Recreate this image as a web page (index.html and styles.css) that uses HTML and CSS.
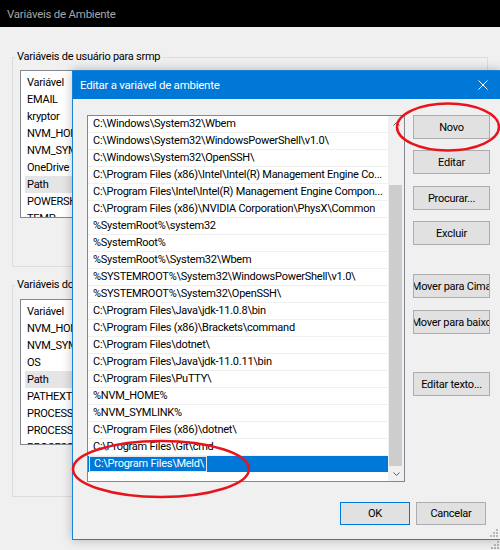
FILE: index.html
```html
<!DOCTYPE html>
<html lang="pt-BR">
<head>
    <meta charset="UTF-8">
    <title>Variáveis de Ambiente</title>
    <link rel="stylesheet" href="styles.css">
</head>
<body>

    <div class="window">
        <div class="win-title">Variáveis de Ambiente</div>
        <div class="win-body">
            <fieldset class="group user">
                <legend>Variáveis de usuário para srmp</legend>
                <div class="varlist">
                    <div class="var-head">Variável</div>
                    <div class="var">EMAIL</div>
                    <div class="var">kryptor</div>
                    <div class="var">NVM_HOME</div>
                    <div class="var">NVM_SYMLINK</div>
                    <div class="var">OneDrive</div>
                    <div class="var sel">Path</div>
                    <div class="var">POWERSHELL_DISTRIBUTION_CHANNEL</div>
                    <div class="var">TEMP</div>
                </div>
            </fieldset>
            <fieldset class="group sys">
                <legend>Variáveis do sistema</legend>
                <div class="varlist">
                    <div class="var-head">Variável</div>
                    <div class="var">NVM_HOME</div>
                    <div class="var">NVM_SYMLINK</div>
                    <div class="var">OS</div>
                    <div class="var sel">Path</div>
                    <div class="var">PATHEXT</div>
                    <div class="var">PROCESSOR_ARCHITECTURE</div>
                    <div class="var">PROCESSOR_IDENTIFIER</div>
                    <div class="var">PROCESSOR_LEVEL</div>
                </div>
            </fieldset>
        </div>
    </div>

    <div class="dialog">
        <div class="dlg-title">
            <span>Editar a variável de ambiente</span>
            <svg width="10" height="10" viewBox="0 0 10 10"><path d="M0.5 0.5L9.5 9.5M9.5 0.5L0.5 9.5" stroke="#fff" stroke-width="1"/></svg>
        </div>
        <div class="dlg-body">
            <div class="dlg-main">
                <div class="pathlist">
                    <div class="rows">
                        <div class="path">C:\Windows\System32\Wbem</div>
                        <div class="path">C:\Windows\System32\WindowsPowerShell\v1.0\</div>
                        <div class="path">C:\Windows\System32\OpenSSH\</div>
                        <div class="path">C:\Program Files (x86)\Intel\Intel(R) Management Engine Co...</div>
                        <div class="path">C:\Program Files\Intel\Intel(R) Management Engine Compon...</div>
                        <div class="path">C:\Program Files (x86)\NVIDIA Corporation\PhysX\Common</div>
                        <div class="path">%SystemRoot%\system32</div>
                        <div class="path">%SystemRoot%</div>
                        <div class="path">%SystemRoot%\System32\Wbem</div>
                        <div class="path">%SYSTEMROOT%\System32\WindowsPowerShell\v1.0\</div>
                        <div class="path">%SYSTEMROOT%\System32\OpenSSH\</div>
                        <div class="path">C:\Program Files\Java\jdk-11.0.8\bin</div>
                        <div class="path">C:\Program Files (x86)\Brackets\command</div>
                        <div class="path">C:\Program Files\dotnet\</div>
                        <div class="path">C:\Program Files\Java\jdk-11.0.11\bin</div>
                        <div class="path">C:\Program Files\PuTTY\</div>
                        <div class="path">%NVM_HOME%</div>
                        <div class="path">%NVM_SYMLINK%</div>
                        <div class="path">C:\Program Files (x86)\dotnet\</div>
                        <div class="path">C:\Program Files\Git\cmd</div>
                        <div class="path sel"><span class="edit">C:\Program Files\Meld\</span></div>
                    </div>
                    <div class="vscroll">
                        <div class="sb-btn">
                            <svg width="7" height="4" viewBox="0 0 7 4"><path d="M0.5 3.5L3.5 0.5L6.5 3.5" stroke="#606060" fill="none"/></svg>
                        </div>
                        <div class="sb-track"><div class="sb-thumb"></div></div>
                        <div class="sb-btn">
                            <svg width="7" height="4" viewBox="0 0 7 4"><path d="M0.5 0.5L3.5 3.5L6.5 0.5" stroke="#606060" fill="none"/></svg>
                        </div>
                    </div>
                </div>
                <div class="side">
                    <button class="btn">Novo</button>
                    <button class="btn">Editar</button>
                    <button class="btn">Procurar...</button>
                    <button class="btn">Excluir</button>
                    <button class="btn move"><span>Mover para Cima</span></button>
                    <button class="btn"><span>Mover para baixo</span></button>
                    <button class="btn text">Editar texto...</button>
                </div>
            </div>
            <div class="dlg-foot">
                <button class="btn default">OK</button>
                <button class="btn">Cancelar</button>
            </div>
        </div>
        <svg class="grip" width="8" height="8" viewBox="0 0 8 8">
            <rect x="6" y="0" width="2" height="2" fill="#b8b8b8"/>
            <rect x="3" y="3" width="2" height="2" fill="#b8b8b8"/>
            <rect x="6" y="3" width="2" height="2" fill="#b8b8b8"/>
            <rect x="0" y="6" width="2" height="2" fill="#b8b8b8"/>
            <rect x="3" y="6" width="2" height="2" fill="#b8b8b8"/>
            <rect x="6" y="6" width="2" height="2" fill="#b8b8b8"/>
        </svg>
    </div>

    <svg class="page-grip" width="8" height="8" viewBox="0 0 8 8">
        <rect x="6" y="0" width="2" height="2" fill="#b0b0b0"/>
        <rect x="3" y="3" width="2" height="2" fill="#b0b0b0"/>
        <rect x="6" y="3" width="2" height="2" fill="#b0b0b0"/>
        <rect x="0" y="6" width="2" height="2" fill="#b0b0b0"/>
        <rect x="3" y="6" width="2" height="2" fill="#b0b0b0"/>
        <rect x="6" y="6" width="2" height="2" fill="#b0b0b0"/>
    </svg>

    <!-- marcações em vermelho -->
    <svg class="marks" width="500" height="550" viewBox="0 0 500 550">
        <ellipse cx="448" cy="127" rx="51" ry="23.5" fill="none" stroke="#e8141c" stroke-width="2.5"/>
        <ellipse cx="161" cy="469" rx="88" ry="28" fill="none" stroke="#e8141c" stroke-width="2.5"/>
    </svg>

</body>
</html>
```

FILE: styles.css
```css
/* janela de fundo */
body {
    margin: 0;
    width: 500px;
    height: 550px;
    overflow: hidden;
    position: relative;
    background-color: #f0f0f0;
    font-family: Roboto, "Noto Sans", sans-serif;
    font-size: 11px;
    letter-spacing: -0.25px;
    color: #000;
}
.win-title {
    height: 27px;
    line-height: 28px;
    background-color: #000;
    color: #a6a6a6;
    padding-left: 7px;
    font-size: 11.5px;
}
.win-body {
    padding: 22px 0 0 12px;
}
.group {
    margin: 0 12px 10px 0;
    padding: 0 0 48px 7px;
    border: 1px solid #dcdcdc;
    min-width: 0;
}
.group legend {
    padding: 0 2px;
    margin-left: -5px;
    line-height: 16px;
}
.group.sys {
    padding-bottom: 51px;
}
.varlist {
    margin: 5px 10px 0 0;
    padding-top: 3px;
    box-sizing: border-box;
    height: 148px;
    background-color: #fff;
    border: 1px solid #828790;
    overflow: hidden;
}
.group.sys .varlist {
    margin-top: 6px;
    height: 146px;
}
/* coluna "Variável" (o resto fica atrás do diálogo) */
.var-head {
    width: 45px;
    height: 17px;
    line-height: 17px;
    padding-left: 6px;
    overflow: hidden;
    white-space: nowrap;
}
.var {
    width: 45px;
    height: 17px;
    line-height: 17px;
    margin-left: 4px;
    padding-left: 2px;
    white-space: nowrap;
    overflow: hidden;
}
.var.sel {
    background-color: #e5e5e5;
}

/* diálogo */
.dialog {
    position: absolute;
    left: 72px;
    top: 70px;
    width: 427px;
    height: 468px;
    border: 1px solid #1883d7;
    background-color: #f0f0f0;
    box-shadow: 0 0 10px rgba(0,0,0,0.25);
}
.dlg-title {
    height: 28px;
    background-color: #0078d7;
    color: #fff;
    font-size: 11.5px;
    display: flex;
    align-items: center;
    justify-content: space-between;
    padding: 0 12px 0 7px;
}
.dlg-body {
    padding: 16px 0 0 14px;
}
.dlg-main {
    display: flex;
    align-items: flex-start;
}
.pathlist {
    width: 316px;
    height: 365px;
    border: 1px solid #828790;
    background-color: #fff;
    display: flex;
}
.rows {
    width: 300px;
    overflow: hidden;
}
.path {
    height: 16px;
    line-height: 16px;
    border-bottom: 1px solid #f0f0f0;
    padding-left: 5px;
    white-space: nowrap;
    overflow: hidden;
}
.path.sel {
    background-color: #0078d7;
    padding-left: 1px;
    border-bottom-color: #fff;
}
.edit {
    display: inline-block;
    vertical-align: top;
    height: 14px;
    line-height: 14px;
    border: 1px solid #e6e6e6;
    padding: 0 2px 0 4px;
    color: #fff;
}
.vscroll {
    width: 16px;
    background-color: #f0f0f0;
    display: flex;
    flex-direction: column;
}
.sb-btn {
    height: 15px;
    display: flex;
    align-items: center;
    justify-content: center;
}
.sb-track {
    flex: 1;
    display: flex;
    flex-direction: column;
    justify-content: flex-end;
}
.sb-thumb {
    height: 281px;
    margin: 0 2px 0 1px;
    background-color: #cdcdcd;
}
.side {
    margin-left: 8px;
    width: 77px;
    display: flex;
    flex-direction: column;
}
.btn {
    height: 24px;
    padding: 0;
    background-color: #e1e1e1;
    border: 1px solid #adadad;
    font: inherit;
    letter-spacing: inherit;
    color: #000;
    display: flex;
    align-items: center;
    justify-content: center;
    overflow: hidden;
    white-space: nowrap;
}
.side .btn + .btn {
    margin-top: 11px;
}
.side .btn:nth-child(3) {
    margin-top: 12px;
}
.side .btn.move {
    margin-top: 29px;
}
.side .btn:nth-child(6) {
    margin-top: 12px;
}
.side .btn.text {
    margin-top: 38px;
}
.dlg-foot {
    display: flex;
    justify-content: flex-end;
    gap: 6px;
    margin-top: 20px;
    padding-right: 14px;
}
.dlg-foot .btn {
    width: 70px;
    height: 23px;
}
.btn.default {
    border-color: #0078d7;
}
.grip {
    position: absolute;
    right: 2px;
    bottom: 2px;
}
.page-grip {
    position: absolute;
    right: 1px;
    bottom: 1px;
}
.marks {
    position: absolute;
    left: 0;
    top: 0;
    pointer-events: none;
}
```
